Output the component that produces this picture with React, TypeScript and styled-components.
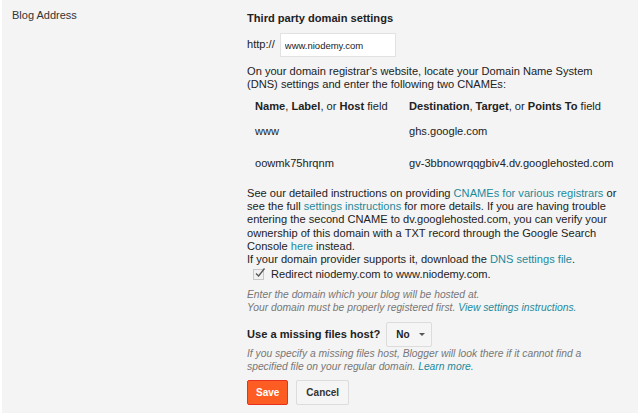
import React from "react";
import styled, { createGlobalStyle } from "styled-components";

const GlobalStyle = createGlobalStyle`
  html, body {
    margin: 0;
    padding: 0;
    background: #fff;
  }
  body {
    font-family: "Liberation Sans", Arial, sans-serif;
    color: #333;
  }
`;

const Panel = styled.div`
  margin: 0 2px;
  background: #f4f4f4;
  display: grid;
  grid-template-columns: 245px 1fr;
  padding-bottom: 8px;
`;

const Label = styled.div`
  padding: 9px 0 0 10px;
  font-size: 11px;
  line-height: 13px;
  color: #333;
`;

const Body = styled.div`
  padding-top: 12px;
  font-size: 11.1px;
  line-height: 13.2px;
  color: #222;
`;

const Title = styled.div`
  font-weight: bold;
  font-size: 11.1px;
  line-height: 13px;
  color: #222;
`;

const UrlRow = styled.div`
  display: flex;
  align-items: center;
  gap: 5px;
  margin-top: 8px;
`;

const UrlInput = styled.input`
  box-sizing: border-box;
  width: 116px;
  height: 24px;
  border: 1px solid #e2e2e2;
  background: #fff;
  padding: 0 4px;
  font-family: "Liberation Sans", Arial, sans-serif;
  font-size: 9.5px;
  color: #222;
  outline: none;
`;

const Para = styled.p<{ $top: number; $width: number }>`
  margin: ${(p) => p.$top}px 0 0;
  max-width: ${(p) => p.$width}px;
`;

const Table = styled.div`
  margin: 9px 0 0 8px;
`;

const Row = styled.div<{ $top: number }>`
  display: grid;
  grid-template-columns: 154px 1fr;
  margin-top: ${(p) => p.$top}px;
`;

const Link = styled.a`
  color: #1d8a9c;
  text-decoration: none;
`;

const CheckRow = styled.label`
  display: flex;
  align-items: center;
  gap: 7px;
  margin: 2px 0 0 6px;
  height: 13px;
`;

const Box = styled.span`
  position: relative;
  box-sizing: border-box;
  width: 11px;
  height: 11px;
  border: 1px solid #c8c8c8;
  background: #f1f1f1;
`;

const Tick = styled.svg`
  position: absolute;
  left: 0px;
  top: -3px;
`;

const Hint = styled.div<{ $top: number }>`
  margin-top: ${(p) => p.$top}px;
  font-style: italic;
  font-size: 10.3px;
  line-height: 13px;
  color: #777;
`;

const HostRow = styled.div`
  display: flex;
  align-items: center;
  gap: 6px;
  margin-top: 8px;
`;

const HostLabel = styled.span`
  font-weight: bold;
  font-size: 11.1px;
  color: #222;
`;

const Select = styled.div`
  box-sizing: border-box;
  width: 46px;
  height: 25px;
  display: flex;
  align-items: center;
  gap: 9px;
  padding-left: 9px;
  border: 1px solid #dcdcdc;
  border-radius: 2px;
  background: #f5f5f5;
  font-weight: bold;
  font-size: 10px;
  color: #222;
`;

const Caret = styled.span`
  width: 0;
  height: 0;
  border-left: 3px solid transparent;
  border-right: 3px solid transparent;
  border-top: 3px solid #555;
`;

const Buttons = styled.div`
  display: flex;
  gap: 8px;
  margin-top: 7px;
`;

const Button = styled.button<{ $primary?: boolean }>`
  box-sizing: border-box;
  height: 25px;
  padding: 0 ${(p) => (p.$primary ? 8 : 9)}px;
  border-radius: 2px;
  font-family: "Liberation Sans", Arial, sans-serif;
  font-weight: bold;
  font-size: 10px;
  cursor: pointer;
  color: ${(p) => (p.$primary ? "#fff" : "#333")};
  background: ${(p) => (p.$primary ? "#fd5d22" : "#f5f5f5")};
  border: 1px solid ${(p) => (p.$primary ? "#e8301f" : "#dcdcdc")};
`;

export default function App() {
  return (
    <>
      <GlobalStyle />
      <Panel>
        <Label>Blog Address</Label>
        <Body>
          <Title>Third party domain settings</Title>
          <UrlRow>
            <span>http://</span>
            <UrlInput defaultValue="www.niodemy.com" />
          </UrlRow>
          <Para $top={8} $width={362}>
            On your domain registrar's website, locate your Domain Name System
            (DNS) settings and enter the following two CNAMEs:
          </Para>
          <Table>
            <Row $top={0}>
              <span>
                <b>Name</b>, <b>Label</b>, or <b>Host</b> field
              </span>
              <span>
                <b>Destination</b>, <b>Target</b>, or <b>Points To</b> field
              </span>
            </Row>
            <Row $top={11}>
              <span>www</span>
              <span>ghs.google.com</span>
            </Row>
            <Row $top={19}>
              <span>oowmk75hrqnm</span>
              <span>gv-3bbnowrqqgbiv4.dv.googlehosted.com</span>
            </Row>
          </Table>
          <Para $top={17} $width={380}>
            See our detailed instructions on providing{" "}
            <Link href="#">CNAMEs for various registrars</Link> or see the full{" "}
            <Link href="#">settings instructions</Link> for more details. If you
            are having trouble entering the second CNAME to dv.googlehosted.com,
            you can verify your ownership of this domain with a TXT record
            through the Google Search Console <Link href="#">here</Link> instead.
            <br />
            If your domain provider supports it, download the{" "}
            <Link href="#">DNS settings file</Link>.
          </Para>
          <CheckRow>
            <Box>
              <Tick width="12" height="12" viewBox="0 0 12 12">
                <path d="M2 6.5 L4.6 9 L10.5 1.5" fill="none" stroke="#555" strokeWidth="1.3" />
              </Tick>
            </Box>
            <span>Redirect niodemy.com to www.niodemy.com.</span>
          </CheckRow>
          <Hint $top={7}>
            Enter the domain which your blog will be hosted at.
            <br />
            Your domain must be properly registered first.{" "}
            <Link href="#">View settings instructions.</Link>
          </Hint>
          <HostRow>
            <HostLabel>Use a missing files host?</HostLabel>
            <Select>
              No
              <Caret />
            </Select>
          </HostRow>
          <Hint $top={0}>
            If you specify a missing files host, Blogger will look there if it
            cannot find a<br />
            specified file on your regular domain.{" "}
            <Link href="#">Learn more.</Link>
          </Hint>
          <Buttons>
            <Button $primary>Save</Button>
            <Button>Cancel</Button>
          </Buttons>
        </Body>
      </Panel>
    </>
  );
}
